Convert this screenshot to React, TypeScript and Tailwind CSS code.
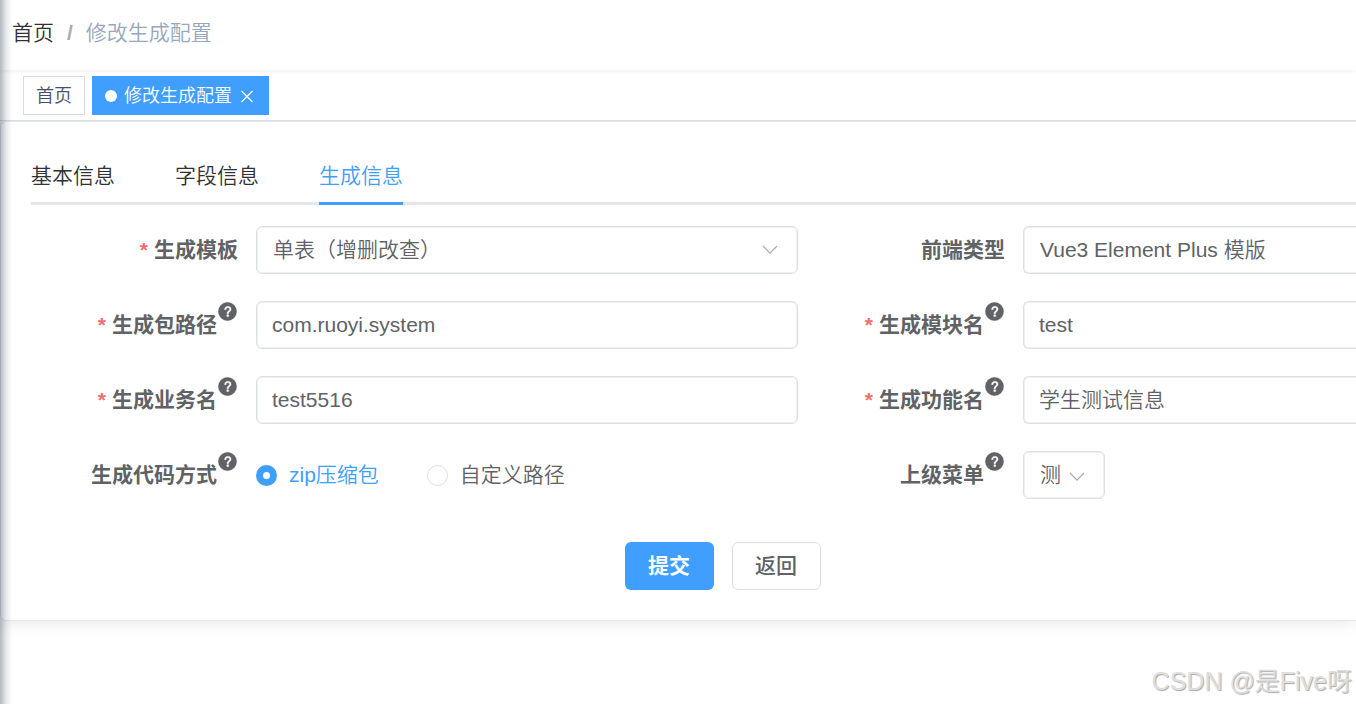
import { ReactNode, useState } from "react";
import clsx from "clsx";

const tabs = ["基本信息", "字段信息", "生成信息"];

const QuestionIcon = () => (
  <svg viewBox="0 0 1024 1024" className="h-[21px] w-[21px] self-start" fill="currentColor" aria-hidden="true">
    <path stroke="currentColor" strokeWidth="12" d="M512 64a448 448 0 1 1 0 896 448 448 0 0 1 0-896z" />
    <path fill="white" stroke="white" strokeWidth="14" d="M535.744 255.488c-52.096 0-92.928 14.784-123.2 44.352-30.976 29.568-45.76 70.4-45.76 122.496h80.256c0-29.568 5.632-52.8 17.6-68.992 13.376-19.712 35.2-28.864 66.176-28.864 23.936 0 42.944 6.336 56.32 19.712 12.672 13.376 19.712 31.68 19.712 54.912 0 17.6-6.336 34.496-19.008 49.984l-8.448 9.856c-45.76 40.832-73.216 70.4-82.368 89.408-9.856 19.008-14.08 42.24-14.08 68.992v9.856h80.96v-9.856c0-16.896 3.52-31.68 10.56-45.76 6.336-12.672 15.488-24.64 28.16-35.2 33.792-29.568 54.208-48.576 60.544-55.616 16.896-22.528 26.048-51.392 26.048-86.592 0-42.944-14.08-76.736-42.24-101.376-28.16-25.344-65.472-37.312-111.232-37.312zm-12.672 406.208a54.27 54.27 0 0 0-38.72 14.784 49.4 49.4 0 0 0-15.488 38.016c0 15.488 4.928 28.16 15.488 38.016A54.85 54.85 0 0 0 523.072 768c15.488 0 28.16-4.928 38.72-14.784a51.52 51.52 0 0 0 16.192-38.72 51.97 51.97 0 0 0-15.488-38.016 55.94 55.94 0 0 0-39.424-14.784z" />
  </svg>
);

const ArrowDown = ({ className }: { className?: string }) => (
  <svg viewBox="0 0 16 10" className={clsx("pointer-events-none absolute h-[10px] w-4 text-[#a8abb2]", className)} fill="none" stroke="currentColor" strokeWidth="1.2" aria-hidden="true">
    <path d="M1 1l7 7.2L15 1" />
  </svg>
);

interface FieldProps {
  id: string;
  label: string;
  required?: boolean;
  help?: boolean;
  children: ReactNode;
}

const Field: React.FC<FieldProps> = ({ id, label, required, help, children }) => {
  return (
    <div className="flex h-12">
      <label htmlFor={id} className="flex w-[225px] shrink-0 items-center justify-end pr-[18px] font-bold whitespace-nowrap">
        {required && <span className="mr-[6px] text-[#f56c6c]">*</span>}
        {label}
        {help && <QuestionIcon />}
      </label>
      {children}
    </div>
  );
};

const box = "h-12 border-[#dcdfe6] bg-white shadow-[inset_0_0_0_1px_#eff0f4] outline-none focus:border-[#409eff]";
const leftBox = "w-full min-w-0 rounded-[6px] border";
// the right column runs on past the edge of the window
const rightBox = "-mr-2 min-w-0 grow rounded-l-[6px] border border-r-0";

interface RadioProps {
  id: string;
  label: string;
  checked: boolean;
  onChange: () => void;
}

const Radio: React.FC<RadioProps> = ({ id, label, checked, onChange }) => {
  return (
    <label htmlFor={id} className={clsx("flex items-center gap-3", checked && "text-[#409eff]")}>
      <input
        id={id}
        type="radio"
        name="genType"
        checked={checked}
        onChange={onChange}
        className="h-[21px] w-[21px] appearance-none rounded-full border border-[#dcdfe6] bg-white checked:border-[7px] checked:border-[#409eff]"
      />
      {label}
    </label>
  );
};

const App = () => {
  const [tab, setTab] = useState("生成信息");
  const [genType, setGenType] = useState("0");

  return (
    <div className="relative min-h-screen overflow-hidden bg-white font-['Liberation_Sans','Noto_Sans_CJK_SC',sans-serif] text-[21px] leading-8 font-[350] text-[#606266]">
      <header className="relative z-20 flex h-[70px] items-center bg-white pb-1 pl-3 shadow-[0_1px_4px_rgba(0,21,41,0.08)]">
        <nav className="flex">
          <a href="#" className="text-[#303133]">首页</a>
          <span className="mx-[13px] font-bold text-[#a8abb2]">/</span>
          <span className="text-[#97a8be]">修改生成配置</span>
        </nav>
      </header>

      <div className="relative z-10 flex h-[51px] items-start gap-[7px] border-b border-[#d8dce5] bg-white pt-[6px] pl-[23px] text-[18px]">
        <a href="#" className="flex h-[39px] items-center border border-[#d8dce5] px-3 text-[#495060]">首页</a>
        <div className="flex h-[39px] items-center bg-[#409eff] pr-[15px] pl-[13px] text-white">
          <span className="mr-[7px] h-3 w-3 rounded-full bg-white" />
          <a href="#">修改生成配置</a>
          <button type="button" aria-label="关闭" className="ml-2">
            <svg viewBox="0 0 14 14" className="h-[14px] w-[14px]" fill="none" stroke="currentColor" strokeWidth="1.1">
              <path d="M1.500 2l11 11M12.500 2l-11 11" />
            </svg>
          </button>
        </div>
      </div>

      <main className="rounded-l-[6px] border border-r-0 border-[#e4e7ed] pt-[29px] pb-[30px] pl-[30px] shadow-[0_0_18px_rgba(0,0,0,0.12)]">
        <div role="tablist" className="mb-[21px] flex gap-[60px] border-b-[3px] border-[#e4e7ed]">
          {tabs.map((name) => (
            <button
              key={name}
              type="button"
              role="tab"
              aria-selected={tab === name}
              onClick={() => setTab(name)}
              className={clsx(
                "-mb-[3px] h-[54px] border-b-[3px] pb-[2px]",
                tab === name ? "border-[#409eff] text-[#409eff]" : "border-transparent text-[#303133]"
              )}
            >
              {name}
            </button>
          ))}
        </div>

        <form onSubmit={(e) => e.preventDefault()}>
          <div className="grid grid-cols-[minmax(0,767fr)_minmax(0,558fr)] gap-y-[27px]">
            <Field id="tplCategory" label="生成模板" required>
              <div className="relative w-full">
                <select id="tplCategory" className={clsx(box, leftBox, "appearance-none pl-4")}>
                  <option>单表（增删改查）</option>
                </select>
                <ArrowDown className="top-[19px] right-[20px]" />
              </div>
            </Field>
            <Field id="tplWebType" label="前端类型">
              <select id="tplWebType" className={clsx(box, rightBox, "appearance-none pl-4")}>
                <option>Vue3 Element Plus 模版</option>
              </select>
            </Field>
            <Field id="packageName" label="生成包路径" required help>
              <input id="packageName" type="text" defaultValue="com.ruoyi.system" className={clsx(box, leftBox, "px-[15px]")} />
            </Field>
            <Field id="moduleName" label="生成模块名" required help>
              <input id="moduleName" type="text" defaultValue="test" className={clsx(box, rightBox, "px-[15px]")} />
            </Field>
            <Field id="businessName" label="生成业务名" required help>
              <input id="businessName" type="text" defaultValue="test5516" className={clsx(box, leftBox, "px-[15px]")} />
            </Field>
            <Field id="functionName" label="生成功能名" required help>
              <input id="functionName" type="text" defaultValue="学生测试信息" className={clsx(box, rightBox, "px-[15px] pb-1")} />
            </Field>
            <Field id="zip" label="生成代码方式" help>
              <div className="flex gap-12">
                <Radio id="zip" label="zip压缩包" checked={genType === "0"} onChange={() => setGenType("0")} />
                <Radio id="custom" label="自定义路径" checked={genType === "1"} onChange={() => setGenType("1")} />
              </div>
            </Field>
            <Field id="parentMenu" label="上级菜单" help>
              <div className="relative w-[82px]">
                <select id="parentMenu" className={clsx(box, leftBox, "appearance-none pl-4")}>
                  <option>测</option>
                </select>
                <ArrowDown className="top-[21px] right-[20px]" />
              </div>
            </Field>
          </div>

          <div className="mt-[43px] flex justify-center gap-[18px] pl-[58px]">
            <button type="submit" className="h-12 w-[89px] rounded-[6px] bg-[#409eff] font-bold text-white">提交</button>
            <button type="button" className="h-12 w-[89px] rounded-[6px] border border-[#dcdfe6] bg-white font-medium">返回</button>
          </div>
        </form>
      </main>

      {/* shadow cast by the sidebar */}
      <div className="pointer-events-none absolute inset-y-0 left-0 z-30 w-3 bg-linear-to-r from-[#001529]/30 via-[#001529]/10 to-transparent" />

      <p className="absolute right-1 bottom-[7px] text-[25px] text-[#dedede] [text-shadow:1px_1px_1px_#aaa]">CSDN @是Five呀</p>
    </div>
  );
};

export default App;
